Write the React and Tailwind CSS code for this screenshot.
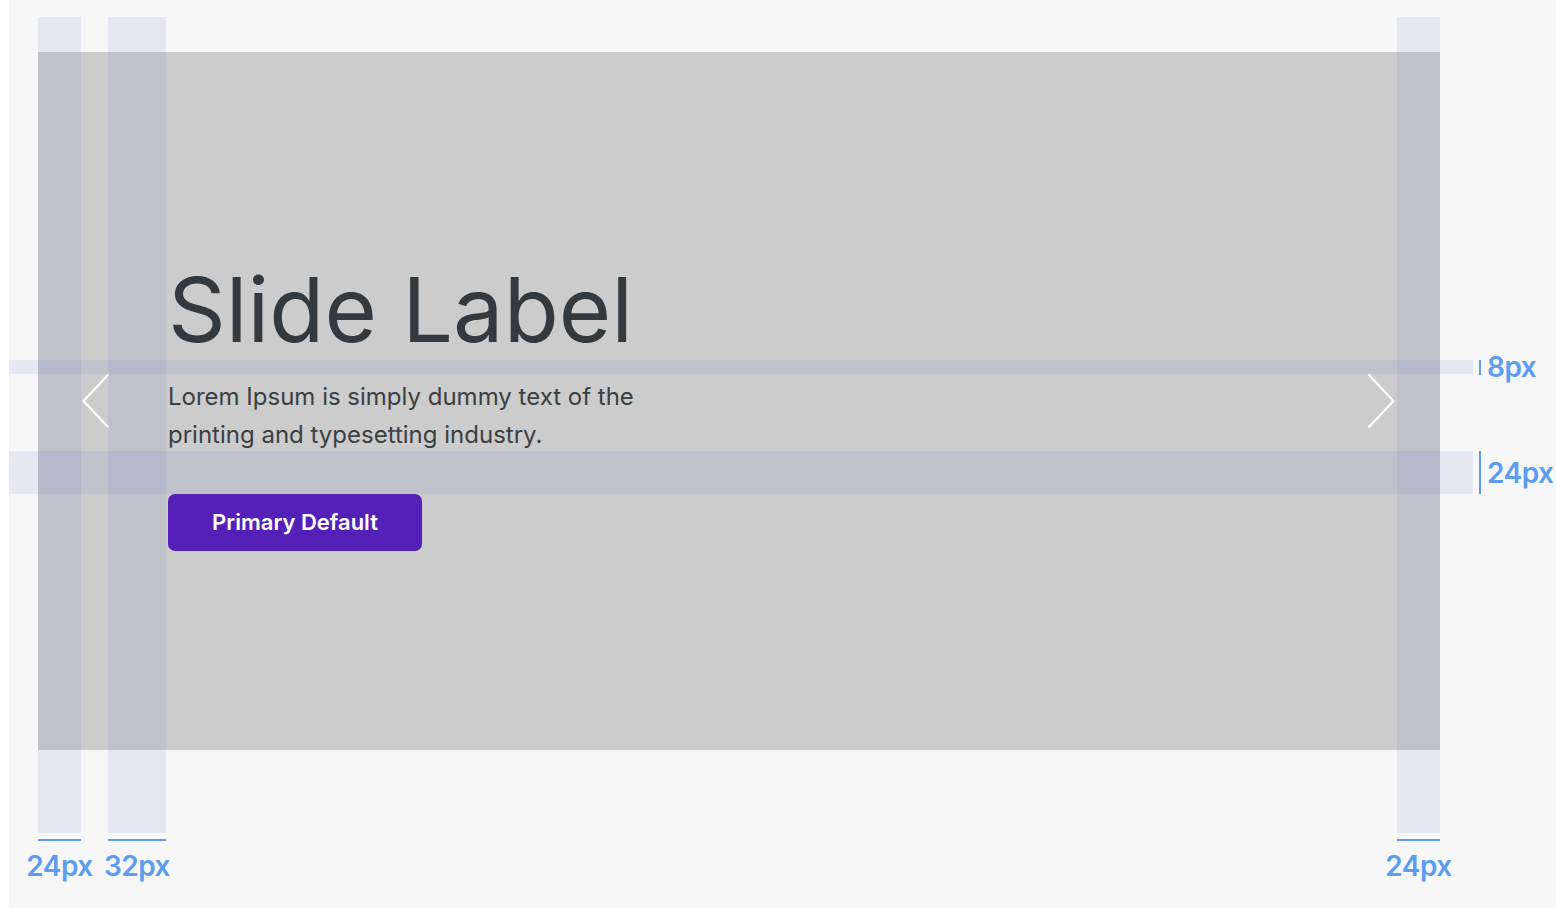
import React from 'react';

const Chevron = ({ dir }) => (
  <svg width="28" height="56" viewBox="0 0 28 56" fill="none" className="shrink-0 self-center">
    {dir === 'left' ? (
      <polyline points="26,2 1.5,28 26,54" stroke="white" strokeWidth="2.2" strokeLinecap="round" strokeLinejoin="round" />
    ) : (
      <polyline points="2,2 26.5,28 2,54" stroke="white" strokeWidth="2.2" strokeLinecap="round" strokeLinejoin="round" />
    )}
  </svg>
);

// vertical spacing guide: tinted bar, underline, label
const ColGuide = ({ width, label }) => (
  <div className={`flex flex-col items-center ${width}`}>
    <div className="h-[816px] w-full bg-[rgba(80,110,200,0.1)]" />
    <div className="mt-[6px] h-[2px] w-full bg-[#5c9df2]" />
    <span className="mt-[7px] whitespace-nowrap text-[28px] leading-[36px] font-semibold tracking-[-0.5px] text-[#5c9df2]">{label}</span>
  </div>
);

const App = () => {
  return (
    <div className="relative w-[1556px] h-[908px] bg-white overflow-hidden" style={{ fontFamily: 'Inter, "Noto Sans", sans-serif' }}>
      <div className="ml-[9px] h-full bg-[#f7f7f7] pt-[52px] pl-[29px]">
        {/* Slide */}
        <div className="flex w-[1402px] h-[698px] bg-[#cccccc]">
          <div className="flex pl-[44px]">
            <Chevron dir="left" />
          </div>
          <div className="flex-1 pl-[58px] pt-[213px]">
            <h1 className="text-[90px] leading-none font-normal text-[#33393c]">Slide Label</h1>
            <p className="mt-[23px] w-[500px] text-[24px] leading-[38px] text-[#3a3f42]">
              Lorem Ipsum is simply dummy text of the printing and typesetting industry.
            </p>
            <button className="mt-[40px] flex h-[57px] w-[254px] items-center justify-center rounded-[7px] bg-[#5520b8] text-[22px] font-semibold text-white">
              Primary Default
            </button>
          </div>
          <div className="flex pr-[45px]">
            <Chevron dir="right" />
          </div>
        </div>
      </div>

      {/* Spacing annotations laid over the slide */}
      <div className="pointer-events-none absolute left-[38px] top-[17px] flex w-[1402px]">
        <ColGuide width="w-[43px]" label="24px" />
        <div className="w-[27px]" />
        <ColGuide width="w-[58px]" label="32px" />
        <div className="flex-1" />
        <ColGuide width="w-[43px]" label="24px" />
      </div>

      <div className="pointer-events-none absolute left-[9px] top-[349px] flex flex-col">
        <div className="flex h-[36px] items-center">
          <div className="h-[14px] w-[1464px] bg-[rgba(80,110,200,0.1)]" />
          <div className="ml-[6px] h-[15px] w-[2px] bg-[#5c9df2]" />
          <span className="ml-[6px] text-[28px] leading-[36px] font-semibold tracking-[-0.5px] text-[#5c9df2]">8px</span>
        </div>
        <div className="mt-[66px] flex h-[43px] items-center">
          <div className="h-[43px] w-[1464px] bg-[rgba(80,110,200,0.1)]" />
          <div className="ml-[6px] h-[43px] w-[2px] bg-[#5c9df2]" />
          <span className="ml-[6px] text-[28px] leading-[36px] font-semibold tracking-[-0.5px] text-[#5c9df2]">24px</span>
        </div>
      </div>
    </div>
  );
};

export default App;
